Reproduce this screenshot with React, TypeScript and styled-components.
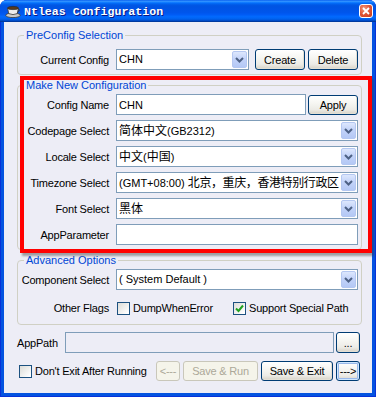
import styled, { createGlobalStyle } from "styled-components"

const GlobalStyle = createGlobalStyle`
  html, body {
    margin: 0;
    padding: 0;
    background: #ffffff;
  }
  body {
    font-family: "Liberation Sans", Arial, sans-serif;
    font-size: 11px;
    color: #000;
  }
`

const Window = styled.div`
  width: 376px;
  height: 397px;
  display: flex;
  flex-direction: column;
  background: #0453e0;
  border-radius: 7px 7px 0 0;
  box-shadow: inset 0 0 0 1px #0831d9;
  overflow: hidden;
`

const TitleBar = styled.div`
  height: 22px;
  flex-shrink: 0;
  display: flex;
  align-items: center;
  padding: 0 3px 0 5px;
  background: linear-gradient(
    180deg,
    #0058ee 0%,
    #3593ff 5%,
    #288eff 8%,
    #127dff 11%,
    #036ffc 14%,
    #0262ee 18%,
    #0057e5 24%,
    #0054e3 30%,
    #0055eb 56%,
    #005bf5 66%,
    #026afe 76%,
    #0062ef 86%,
    #0052d6 92%,
    #0040ab 96%,
    #003092 100%
  );
`

const TitleText = styled.span`
  flex: 1;
  margin-left: 3px;
  font-family: "Liberation Mono", "Courier New", monospace;
  font-weight: bold;
  font-size: 11.6px;
  color: #ffffff;
  text-shadow: 1px 1px 0 #0a1883;
  white-space: nowrap;
`

const CloseButton = styled.span`
  width: 14px;
  height: 14px;
  box-sizing: border-box;
  border: 1px solid #ffffff;
  border-radius: 3px;
  background: radial-gradient(circle at 35% 30%, #f09a7c 0%, #e0583a 45%, #c3391a 100%);
  display: flex;
  align-items: center;
  justify-content: center;
`

const Body = styled.div`
  position: relative;
  flex: 1;
  margin: 0 4px 4px;
  padding: 7px 10px 0 13px;
  background: #ededf6;
  display: flex;
  flex-direction: column;
`

const GroupBox = styled.fieldset<{ $top: number; $bottom: number; $rowGap: number }>`
  margin: 0 0 4px 0;
  padding: ${(p) => p.$top}px 3px ${(p) => p.$bottom}px 0;
  border: 1px solid #d0d0c4;
  border-radius: 4px;
  min-width: 0;
  display: grid;
  grid-template-columns: 91px 1fr;
  column-gap: 7px;
  row-gap: ${(p) => p.$rowGap}px;
  align-items: center;
`

const Legend = styled.legend`
  margin-left: 6px;
  padding: 0 2px;
  line-height: 13px;
  font-size: 11px;
  color: #0046d5;
`

const FieldLabel = styled.span`
  text-align: right;
  white-space: nowrap;
  letter-spacing: -0.2px;
`

const ControlRow = styled.div<{ $gap: number }>`
  display: flex;
  align-items: center;
  gap: ${(p) => p.$gap}px;
`

const Combo = styled.div<{ $width?: number }>`
  ${(p) => (p.$width ? `width: ${p.$width}px; flex-shrink: 0;` : "flex: 1;")}
  height: 21px;
  box-sizing: border-box;
  border: 1px solid #7f9db9;
  background: #ffffff;
  display: flex;
  align-items: center;
  padding: 0 1px 0 2px;
  min-width: 0;
`

const ComboText = styled.span`
  flex: 1;
  min-width: 0;
  overflow: hidden;
  white-space: nowrap;
  line-height: 17px;
`

const Han = styled.span<{ $tight?: boolean }>`
  font-family: "Noto Sans CJK SC", sans-serif;
  font-size: 12px;
  line-height: 17px;
  letter-spacing: ${(p) => (p.$tight ? "-0.4px" : "0")};
`

const DropButton = styled.span`
  width: 15px;
  height: 17px;
  box-sizing: border-box;
  flex-shrink: 0;
  border: 1px solid #b4c7f1;
  border-radius: 2px;
  background: linear-gradient(180deg, #dde7fd 0%, #c3d3f9 45%, #b4c8f5 100%);
  display: flex;
  align-items: center;
  justify-content: center;
`

const TextField = styled.input<{ $disabled?: boolean }>`
  flex: 1;
  min-width: 0;
  height: 21px;
  box-sizing: border-box;
  border: 1px solid #7f9db9;
  background: ${(p) => (p.$disabled ? "#ededf6" : "#ffffff")};
  padding: 0 2px;
  margin: 0;
  font-family: "Liberation Sans", Arial, sans-serif;
  font-size: 11px;
  color: #000;
  outline: none;
`

const Button = styled.button<{ $w: number; $h?: number; $default?: boolean }>`
  width: ${(p) => p.$w}px;
  height: ${(p) => p.$h ?? 21}px;
  flex-shrink: 0;
  box-sizing: border-box;
  margin: 0;
  padding: 0;
  border: 1px solid #003c74;
  border-radius: 3px;
  background: linear-gradient(180deg, #ffffff 0%, #f6f6f2 40%, #ecebe6 75%, #d8d2c6 100%);
  font-family: "Liberation Sans", Arial, sans-serif;
  font-size: 11px;
  letter-spacing: -0.2px;
  color: #000;
  ${(p) =>
    p.$default
      ? "box-shadow: inset 0 0 0 1px #cee7ff, inset 0 0 0 2px #98b8ea;"
      : "box-shadow: inset -1px -1px 0 #e3dfd4;"}

  &:disabled {
    border-color: #c9c7ba;
    background: #f5f4ea;
    color: #aca899;
    box-shadow: none;
  }
`

const CheckItem = styled.div<{ $width?: number }>`
  display: flex;
  align-items: center;
  gap: 3px;
  ${(p) => (p.$width ? `width: ${p.$width}px;` : "")}
  white-space: nowrap;
  letter-spacing: -0.2px;
`

const CheckBox = styled.span`
  width: 13px;
  height: 13px;
  box-sizing: border-box;
  flex-shrink: 0;
  border: 1px solid #1c5180;
  background: linear-gradient(135deg, #dcdcd7 0%, #ffffff 90%);
  display: flex;
  align-items: center;
  justify-content: center;
`

const FooterRow = styled.div<{ $top: number }>`
  display: flex;
  align-items: center;
  margin-top: ${(p) => p.$top}px;
  padding-right: 2px;
`

const FooterLabel = styled.span`
  width: 48px;
  flex-shrink: 0;
  letter-spacing: -0.2px;
`

const ButtonGroup = styled.div`
  margin-left: auto;
  display: flex;
  gap: 3px;
`

// annotation frame drawn over the "Make New Configuration" box
const Highlight = styled.div`
  position: absolute;
  left: 16px;
  top: 54px;
  width: 352px;
  height: 177px;
  box-sizing: border-box;
  border: 4px solid #ff0000;
  box-shadow: 2px 3px 2px rgba(60, 60, 60, 0.45);
  pointer-events: none;
`

function Chevron() {
  return (
    <svg width="9" height="6" viewBox="0 0 9 6">
      <polyline points="1,1 4.5,4.5 8,1" fill="none" stroke="#4d6185" strokeWidth="2" />
    </svg>
  )
}

function Check() {
  return (
    <svg width="9" height="9" viewBox="0 0 9 9">
      <polyline points="1,4.5 3.5,7 8,1.5" fill="none" stroke="#21a121" strokeWidth="2" />
    </svg>
  )
}

function CupIcon() {
  return (
    <svg width="16" height="14" viewBox="0 0 16 14">
      <ellipse cx="8" cy="11.3" rx="7.3" ry="2.3" fill="#c9c9c9" stroke="#3a3a3a" strokeWidth="0.8" />
      <path d="M2.6 4 L13.4 4 L12.3 9.6 Q8 11.6 3.7 9.6 Z" fill="#ededed" stroke="#3a3a3a" strokeWidth="0.8" />
      <path d="M13 5 Q16 5.3 12.4 8.6" fill="none" stroke="#3a3a3a" strokeWidth="1" />
      <ellipse cx="8" cy="4" rx="5.4" ry="1.6" fill="#5b3b1c" stroke="#2a2a2a" strokeWidth="0.7" />
    </svg>
  )
}

function Select({ children, width }: { children: React.ReactNode; width?: number }) {
  return (
    <Combo $width={width}>
      <ComboText>{children}</ComboText>
      <DropButton>
        <Chevron />
      </DropButton>
    </Combo>
  )
}

export default function App() {
  return (
    <>
      <GlobalStyle />
      <Window>
        <TitleBar>
          <CupIcon />
          <TitleText>Ntleas Configuration</TitleText>
          <CloseButton>
            <svg width="8" height="8" viewBox="0 0 8 8">
              <path d="M1 1 L7 7 M7 1 L1 7" stroke="#fff" strokeWidth="1.8" />
            </svg>
          </CloseButton>
        </TitleBar>

        <Body>
          <GroupBox $top={7} $bottom={4} $rowGap={5}>
            <Legend>PreConfig Selection</Legend>
            <FieldLabel>Current Config</FieldLabel>
            <ControlRow $gap={6}>
              <Select width={133}>CHN</Select>
              <ControlRow $gap={3}>
                <Button $w={50}>Create</Button>
                <Button $w={50}>Delete</Button>
              </ControlRow>
            </ControlRow>
          </GroupBox>

          <GroupBox $top={2} $bottom={4} $rowGap={5}>
            <Legend>Make New Configuration</Legend>
            <FieldLabel>Config Name</FieldLabel>
            <ControlRow $gap={2}>
              <TextField readOnly value="CHN" />
              <Button $w={50} $h={20}>Apply</Button>
            </ControlRow>

            <FieldLabel>Codepage Select</FieldLabel>
            <Select>
              <Han>简体中文</Han>(GB2312)
            </Select>

            <FieldLabel>Locale Select</FieldLabel>
            <Select>
              <Han>中文</Han>(<Han>中国</Han>)
            </Select>

            <FieldLabel>Timezone Select</FieldLabel>
            <Select>
              (GMT+08:00) <Han $tight>北京，重庆，香港特别行政区</Han>
            </Select>

            <FieldLabel>Font Select</FieldLabel>
            <Select>
              <Han>黑体</Han>
            </Select>

            <FieldLabel>AppParameter</FieldLabel>
            <ControlRow $gap={0}>
              <TextField readOnly value="" />
            </ControlRow>
          </GroupBox>

          <GroupBox $top={2} $bottom={6} $rowGap={8}>
            <Legend>Advanced Options</Legend>
            <FieldLabel>Component Select</FieldLabel>
            <Select>( System Default )</Select>

            <FieldLabel>Other Flags</FieldLabel>
            <ControlRow $gap={0} style={{ height: 20, paddingLeft: 1 }}>
              <CheckItem $width={116}>
                <CheckBox />
                DumpWhenError
              </CheckItem>
              <CheckItem>
                <CheckBox>
                  <Check />
                </CheckBox>
                Support Special Path
              </CheckItem>
            </ControlRow>
          </GroupBox>

          <FooterRow $top={3}>
            <FooterLabel>AppPath</FooterLabel>
            <TextField $disabled readOnly value="" />
            <Button $w={24} $h={21} style={{ marginLeft: 2 }}>
              ...
            </Button>
          </FooterRow>

          <FooterRow $top={8}>
            <CheckItem style={{ paddingLeft: 2 }}>
              <CheckBox />
              Don't Exit After Running
            </CheckItem>
            <ButtonGroup>
              <Button $w={24} $h={20} disabled>
                &lt;---
              </Button>
              <Button $w={75} $h={20} disabled>
                Save &amp; Run
              </Button>
              <Button $w={72} $h={20}>
                Save &amp; Exit
              </Button>
              <Button $w={24} $h={20} $default>
                ---&gt;
              </Button>
            </ButtonGroup>
          </FooterRow>

          <Highlight />
        </Body>
      </Window>
    </>
  )
}
